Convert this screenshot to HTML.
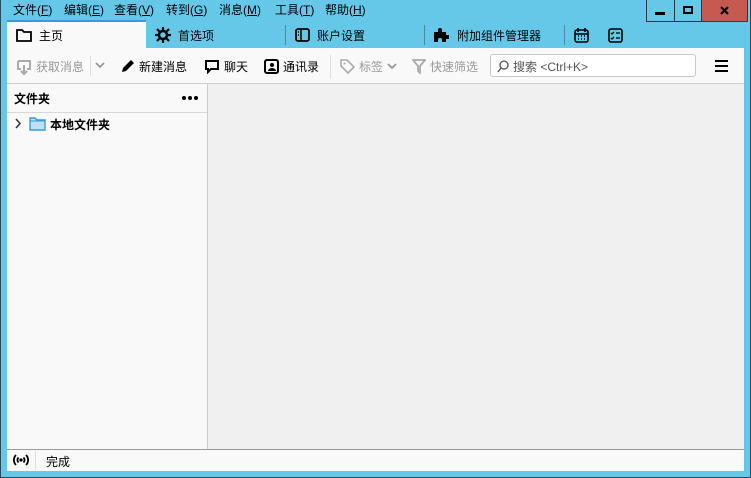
<!DOCTYPE html>
<html><head><meta charset="utf-8"><style>
*{margin:0;padding:0;box-sizing:border-box}
body{width:751px;height:478px;overflow:hidden;background:#66c8e8;font-family:"Liberation Sans","Noto Sans CJK SC",sans-serif;font-size:12px;color:#000;position:relative}
.abs{position:absolute}
.abs>svg{display:block}
.frame{position:absolute;left:0;top:0;width:751px;height:478px;border:1px solid #2b4a57;border-top:none}
.menu span{position:absolute;top:1px;font-size:12px}
.tab{position:absolute;top:22px;height:26px;display:flex;align-items:center;font-size:12px}
.sep{position:absolute;width:1px;background:#4a8aa3}
.tb{position:absolute;top:58px;font-size:12px;display:flex;align-items:center;gap:4px}
.gray{color:#9a9a9a}
</style></head><body>
<div class="frame"></div>
<div class="menu">
<span style="left:13px">文件(<u>F</u>)</span><span style="left:64px">编辑(<u>E</u>)</span><span style="left:114px">查看(<u>V</u>)</span><span style="left:166px">转到(<u>G</u>)</span><span style="left:219px">消息(<u>M</u>)</span><span style="left:275px">工具(<u>T</u>)</span><span style="left:325px">帮助(<u>H</u>)</span>
</div>
<div class="abs" style="left:646px;top:0;width:102px;height:22px;border:1px solid #2b3a40;border-top:none;background:#66c8e8"></div>
<div class="abs" style="left:674px;top:0;width:1px;height:21px;background:#2b3a40"></div>
<div class="abs" style="left:701px;top:0;width:1px;height:21px;background:#2b3a40"></div>
<div class="abs" style="left:702px;top:0;width:45px;height:21px;background:#c75a50"></div>
<div class="abs" style="left:655px;top:12px;width:10px;height:3px;background:#000"></div>
<div class="abs" style="left:683px;top:6px;width:10px;height:8px;border:2px solid #000"></div>
<div class="abs" style="left:720px;top:6px"><svg width="9" height="9"><path d="M1 1l7 7M8 1l-7 7" stroke="#000" stroke-width="2.2"/></svg></div>
<!-- tabs -->
<div class="abs" style="left:7px;top:20px;width:139px;height:29px;background:#f9f9f9;border-top:2px solid #3a9ad9"></div>
<div class="tab" style="left:16px"><svg width="16" height="14"><path d="M1 2h5l2 2h7v9H1z" fill="none" stroke="#000" stroke-width="1.8"/></svg><span style="margin-left:7px">主页</span></div>
<div class="tab" style="left:155px"><svg width="16" height="16" viewBox="0 0 16 16"><circle cx="8" cy="8" r="4" fill="none" stroke="#000" stroke-width="2.5"/><g stroke="#000" stroke-width="2.2"><path d="M8 0v3M8 13v3M0 8h3M13 8h3M2 2l2.5 2.5M11.5 11.5L14 14M14 2l-2.5 2.5M4.5 11.5L2 14"/></g></svg><span style="margin-left:7px">首选项</span></div>
<div class="sep" style="left:285px;top:25px;height:20px"></div>
<div class="tab" style="left:295px"><svg width="15" height="14"><rect x="1" y="1" width="13" height="12" rx="2" fill="none" stroke="#000" stroke-width="1.8"/><path d="M6 1v12M3 4h1M3 7h1" stroke="#000" stroke-width="1.5"/></svg><span style="margin-left:7px">账户设置</span></div>
<div class="sep" style="left:424px;top:25px;height:20px"></div>
<div class="tab" style="left:433px"><svg width="16" height="16" viewBox="0 0 16 16"><path d="M1 5h4V3a2 2 0 014 0v2h4v3h2a2 2 0 010 4h-2v3H9v-2a2 2 0 00-4 0v2H1z" fill="#000"/></svg><span style="margin-left:8px">附加组件管理器</span></div>
<div class="sep" style="left:564px;top:25px;height:20px"></div>
<div class="tab" style="left:574px"><svg width="15" height="15"><rect x="1" y="2" width="13" height="12" rx="2" fill="none" stroke="#000" stroke-width="1.6"/><path d="M4 0v4M11 0v4M1 6h13" stroke="#000" stroke-width="1.6"/><path d="M4 8h1M7 8h1M10 8h1M4 11h1M7 11h1M10 11h1" stroke="#000" stroke-width="1.5"/></svg></div>
<div class="tab" style="left:608px"><svg width="15" height="15"><rect x="1" y="1" width="13" height="13" rx="2" fill="none" stroke="#000" stroke-width="1.6"/><path d="M3 5l1 1 2-2M8 5h4M3 10l1 1 2-2M8 10h4" stroke="#000" stroke-width="1.3" fill="none"/></svg></div>
<!-- toolbar -->
<div class="abs" style="left:7px;top:48px;width:737px;height:36px;background:#f9f9f9;border-bottom:1px solid #ccc"></div>
<div class="tb gray" style="left:16px"><svg width="16" height="16"><path d="M2 2h12v8h-3M5 10H2V2" fill="none" stroke="#aaa" stroke-width="2"/><path d="M8 6v9M5 12l3 3 3-3" fill="none" stroke="#aaa" stroke-width="2"/></svg><span>获取消息</span></div>
<div class="sep" style="left:90px;top:56px;height:20px;background:#ddd"></div>
<div class="abs" style="left:95px;top:62px"><svg width="10" height="8"><path d="M1 1l4 4 4-4" fill="none" stroke="#999" stroke-width="1.8"/></svg></div>
<div class="tb" style="left:120px"><svg width="15" height="15"><path d="M2 13l1-4 8-8 3 3-8 8z" fill="#000"/></svg><span>新建消息</span></div>
<div class="tb" style="left:204px"><svg width="16" height="15"><path d="M2 2h12v8H7l-3 3v-3H2z" fill="none" stroke="#000" stroke-width="2"/></svg><span>聊天</span></div>
<div class="tb" style="left:264px"><svg width="15" height="15"><rect x="1" y="1" width="13" height="13" rx="2" fill="none" stroke="#000" stroke-width="2"/><circle cx="8" cy="6" r="2" fill="#000"/><path d="M4 12a4 3 0 018 0z" fill="#000"/></svg><span>通讯录</span></div>
<div class="sep" style="left:330px;top:55px;height:24px;background:#ddd"></div>
<div class="tb gray" style="left:340px"><svg width="15" height="15"><path d="M1 1h6l7 7-6 6-7-7z" fill="none" stroke="#aaa" stroke-width="1.6"/><circle cx="4.5" cy="4.5" r="1" fill="#aaa"/></svg><span>标签</span><svg width="10" height="8"><path d="M1 1l4 4 4-4" fill="none" stroke="#999" stroke-width="1.8"/></svg></div>
<div class="tb gray" style="left:412px"><svg width="14" height="15"><path d="M1 1h12L8 7v7L6 12V7z" fill="none" stroke="#aaa" stroke-width="1.8"/></svg><span>快速筛选</span></div>
<div class="abs" style="left:490px;top:54px;width:206px;height:23px;background:#fff;border:1px solid #c8c8c8;border-radius:3px"></div>
<div class="tb" style="left:497px;color:#555"><svg width="12" height="13"><circle cx="7" cy="5" r="4" fill="none" stroke="#555" stroke-width="1.3"/><path d="M4 8l-3 4" stroke="#555" stroke-width="1.4"/></svg><span>搜索 &lt;Ctrl+K&gt;</span></div>
<div class="abs" style="left:715px;top:60px;width:13px;height:2px;background:#000;box-shadow:0 5px 0 #000,0 10px 0 #000"></div>
<!-- folder pane -->
<div class="abs" style="left:7px;top:84px;width:201px;height:365px;background:#f9f9f9;border-right:1px solid #ccc"></div>
<div class="abs" style="left:7px;top:112px;width:200px;height:1px;background:#d8d8d8"></div>
<div class="abs" style="left:14px;top:90px;font-weight:bold">文件夹</div>
<div class="abs" style="left:182px;top:96px"><svg width="16" height="4"><circle cx="2" cy="2" r="2"/><circle cx="8" cy="2" r="2"/><circle cx="14" cy="2" r="2"/></svg></div>
<div class="abs" style="left:15px;top:118px"><svg width="8" height="11"><path d="M1 1l4 4.5L1 10" fill="none" stroke="#333" stroke-width="1.5"/></svg></div>
<div class="abs" style="left:29px;top:116px"><svg width="17" height="15"><path d="M1 2h5l2 2h8v10H1z" fill="#c2def8" stroke="#3a9ad9" stroke-width="1.4"/><path d="M1 5h15" stroke="#3a9ad9"/></svg></div>
<div class="abs" style="left:50px;top:116px;font-weight:bold">本地文件夹</div>
<!-- main -->
<div class="abs" style="left:208px;top:84px;width:536px;height:365px;background:#f0f0f0"></div>
<!-- status -->
<div class="abs" style="left:7px;top:449px;width:737px;height:22px;background:#f9f9f9;border-top:1px solid #999"></div>
<div class="abs" style="left:35px;top:451px;width:1px;height:19px;background:#ddd"></div>
<div class="abs" style="left:12px;top:453px"><svg width="18" height="14"><path d="M4 2a7 7 0 000 10M14 2a7 7 0 010 10M6.5 4.5a3.5 3.5 0 000 5M11.5 4.5a3.5 3.5 0 010 5" fill="none" stroke="#000" stroke-width="1.8"/><circle cx="9" cy="7" r="1.6"/></svg></div>
<div class="abs" style="left:46px;top:453px">完成</div>
</body></html>
